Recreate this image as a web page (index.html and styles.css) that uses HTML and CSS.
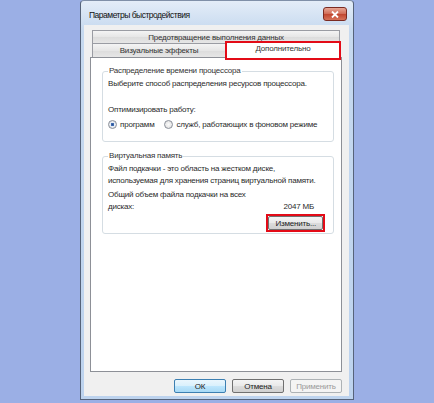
FILE: index.html
```html
<!DOCTYPE html>
<html lang="ru">
<head>
    <meta charset="UTF-8">
    <title>Параметры быстродействия</title>
    <link rel="stylesheet" href="styles.css">
</head>
<body>
    <div class="window">
        <div class="titlebar">
            <span class="title">Параметры быстродействия</span>
            <span class="close">
                <svg width="8" height="7" viewBox="0 0 8 7">
                    <path d="M1 0.5 L7 6.5 M7 0.5 L1 6.5" stroke="#fff" stroke-width="1.8"/>
                </svg>
            </span>
        </div>

        <div class="client">
            <div class="tabs">
                <div class="tab-row">
                    <div class="tab wide">Предотвращение выполнения данных</div>
                </div>
                <div class="tab-row">
                    <div class="tab">Визуальные эффекты</div>
                    <div class="tab active">Дополнительно</div>
                </div>
            </div>

            <div class="pane">
                <fieldset class="group cpu">
                    <legend>Распределение времени процессора</legend>
                    <p>Выберите способ распределения ресурсов процессора.</p>
                    <p class="gap-lg">Оптимизировать работу:</p>
                    <div class="radios">
                        <span class="radio checked"></span><span class="radio-label">программ</span>
                        <span class="radio"></span><span class="radio-label">служб, работающих в фоновом режиме</span>
                    </div>
                </fieldset>

                <fieldset class="group memory">
                    <legend>Виртуальная память</legend>
                    <p>Файл подкачки - это область на жестком диске,</p>
                    <p>используемая для хранения страниц виртуальной памяти.</p>
                    <div class="size-row">
                        <span class="size-label">Общий объем файла подкачки на всех дисках:</span>
                        <span class="size-value">2047 МБ</span>
                    </div>
                    <div class="change-row">
                        <span class="highlight"><span class="btn">Изменить...</span></span>
                    </div>
                </fieldset>
            </div>

            <div class="buttons">
                <span class="btn default">ОК</span>
                <span class="btn">Отмена</span>
                <span class="btn disabled">Применить</span>
            </div>
        </div>
    </div>
</body>
</html>
```

FILE: styles.css
```css
body {
    margin: 0;
    height: 403px;
    background-color: #9bafe5;
    font-family: "Liberation Sans", Arial, sans-serif;
    font-size: 8px;
    letter-spacing: -0.2px;
    color: #2a2a2a;
    overflow: hidden;
}
.window {
    box-sizing: border-box;
    width: 274px;
    height: 400px;
    margin-left: 80px;
    border: 1px solid #56637a;
    border-top-color: #8090a8;
    border-radius: 4px 4px 0 0;
    background: linear-gradient(#e4edf8, #c6d9ef 30px, #bdd3ee);
    padding: 0 4px 3px 3px;
    display: flex;
    flex-direction: column;
}
.titlebar {
    height: 24px;
    display: flex;
    align-items: center;
    justify-content: space-between;
    padding-left: 5px;
}
.title {
    font-size: 8.5px;
    letter-spacing: -0.5px;
    color: #111;
    padding-top: 4px;
}
.close {
    width: 22px;
    height: 12px;
    margin-right: 2px;
    margin-top: 2px;
    border: 1px solid #7a2b22;
    border-radius: 3px;
    background: linear-gradient(#e8a795, #d06a55 50%, #c0452f 51%, #d6735a);
    display: flex;
    align-items: center;
    justify-content: center;
}
.client {
    flex: 1;
    background-color: #f0f0f0;
    padding: 5px 7px 3px 6px;
    display: flex;
    flex-direction: column;
}
.tabs {
    height: 27px;
    display: flex;
    flex-direction: column;
    line-height: 13px;
}
.tab-row {
    display: flex;
    height: 13px;
    padding: 0 2px;
}
.tab-row + .tab-row {
    height: 14px;
    padding-right: 0;
}
.tab {
    box-sizing: border-box;
    border: 1px solid #9a9ca3;
    border-bottom: none;
    background: linear-gradient(#f4f4f4, #e6e6e6 50%, #dcdcdc 51%, #e6e6e6);
    text-align: center;
    color: #333;
}
.tab.wide {
    flex: 1;
}
.tab-row + .tab-row .tab {
    width: 134px;
}
.tab-row .tab.active {
    width: 116px;
    height: 19px;
    margin-top: -2px;
    margin-left: -1px;
    border: 2px solid #e30b17;
    background: #fff;
    line-height: 12px;
    position: relative;
    z-index: 1;
}
.pane {
    flex: 1;
    background-color: #fff;
    border: 1px solid #8d9097;
    padding: 7px 7px 0 11px;
}
.group {
    margin: 0;
    padding: 1px 6px 11px 5px;
    border: 1px solid #d5dde3;
    border-radius: 3px;
}
.group.memory {
    margin-top: 8px;
    padding-bottom: 1px;
}
.group legend {
    padding: 0 1px;
    margin-left: 0;
    line-height: 12px;
    color: #333;
}
.group p {
    margin: 0;
    line-height: 12px;
}
.group p.gap-lg {
    margin-top: 14px;
}
.radios {
    display: flex;
    align-items: center;
    height: 12px;
    margin-top: 2px;
    white-space: nowrap;
}
.radio {
    box-sizing: border-box;
    flex-shrink: 0;
    width: 9px;
    height: 9px;
    border: 1px solid #8a8f99;
    border-radius: 50%;
    background: radial-gradient(#fbfbfb, #dcdcdc);
}
.radio.checked {
    background: radial-gradient(#2b4e8c 0, #4472b8 30%, #e8eef6 40%, #dcdcdc);
}
.radio-label {
    margin-left: 3px;
    margin-right: 10px;
}
.size-row {
    display: flex;
    justify-content: space-between;
    align-items: flex-end;
    margin-top: 2px;
    line-height: 12px;
    padding-right: 13px;
}
.size-label {
    width: 150px;
}
.change-row {
    display: flex;
    justify-content: flex-end;
    margin-top: 1px;
    padding-right: 2px;
}
.highlight {
    display: flex;
    border: 2px solid #e30b17;
}
.btn {
    box-sizing: border-box;
    display: inline-flex;
    align-items: center;
    justify-content: center;
    height: 14px;
    padding: 0 6px;
    border: 1px solid #707070;
    border-radius: 2px;
    background: linear-gradient(#f4f4f4, #e9e9e9 50%, #dcdcdc 51%, #d0d0d0);
    color: #222;
}
.buttons {
    display: flex;
    justify-content: flex-end;
    gap: 6px;
    margin-top: 7px;
}
.buttons .btn {
    width: 52px;
}
.btn.default {
    border-color: #3c7fb1;
    background: linear-gradient(#eaf6fd, #d9f0fc 50%, #bee6fd 51%, #a7d9f5);
}
.btn.disabled {
    border-color: #adb2b5;
    background: #f4f4f4;
    color: #9a9a9a;
}
```
